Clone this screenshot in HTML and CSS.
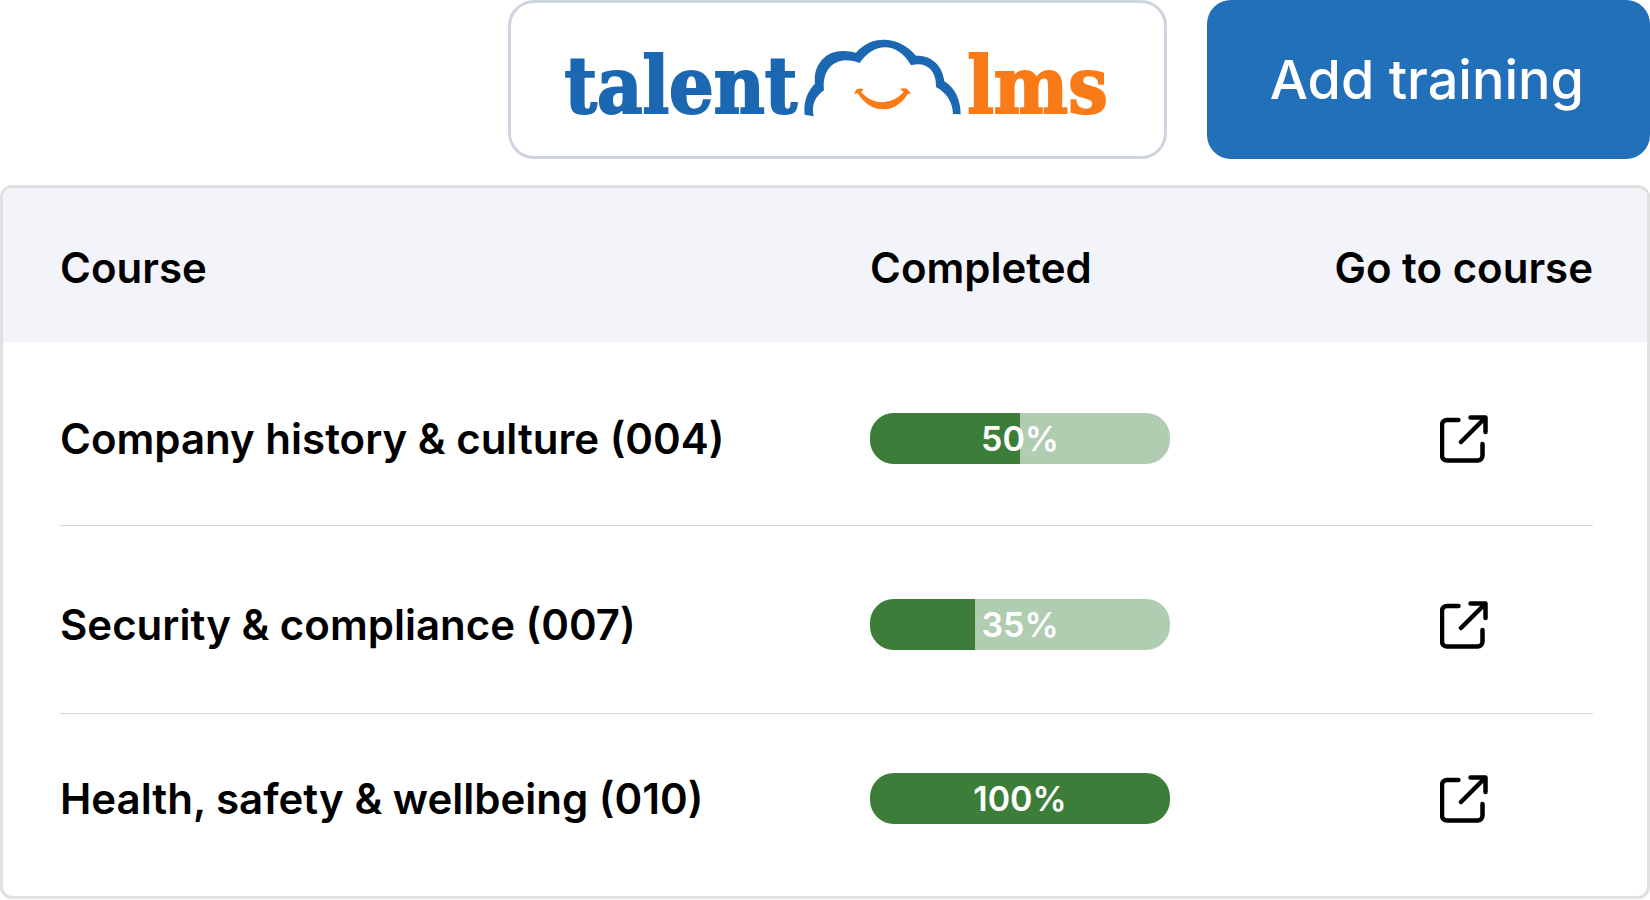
FILE: index.html
```html
<!DOCTYPE html>
<html lang="en">
<head>
<meta charset="utf-8">
<title>Courses</title>
<link rel="stylesheet" href="styles.css">
</head>
<body>
<svg class="sprite" aria-hidden="true">
  <symbol id="open" viewBox="0 0 48 48">
    <path d="M18.500 5H7a5 5 0 0 0-5 5V40.500a5 5 0 0 0 5 5H37.500a5 5 0 0 0 5-5V29M21 27 45 3M30.500 2.500H45.500V17" fill="none" stroke="currentColor" stroke-width="4.500" stroke-linecap="round" stroke-linejoin="round"/>
  </symbol>
</svg>
<main class="page">
  <header class="toolbar">
    <div class="brand">
      <span class="brand-talent">talent</span>
      <svg class="cloud" viewBox="70 110 480 240" aria-hidden="true">
        <path fill="#1b67b2" d="M78 343C74 304 86 273 109 250C102 187 150 144 205 153Q220 154 232 157C276 104 360 103 412 166C457 164 492 195 497 243C530 263 546 300 546 342L523 341C522 305 503 277 472 260C474 208 440 182 397 195C357 124 286 124 243 188C180 162 128 198 136 270C108 290 98 315 105 348Z"/>
        <path fill="#f97b17" d="M226 281L234 267Q245 262 254 267L248 276Q275 306 312 306Q350 304 375 275L364 267Q375 262 385 265L398 281L388 280Q358 327 312 327Q268 327 237 279Z"/>
      </svg>
      <span class="brand-lms">lms</span>
    </div>
    <button class="add" type="button">Add training</button>
  </header>
  <section class="card">
    <table class="courses">
      <thead>
        <tr><th class="name" scope="col">Course</th><th class="done" scope="col">Completed</th><th class="go" scope="col">Go to course</th></tr>
      </thead>
      <tbody>
        <tr>
          <td class="name">Company history &amp; culture (004)</td>
          <td class="done"><div class="bar" role="progressbar" aria-label="Company history &amp; culture" aria-valuenow="50"><div class="fill" style="width:50%"></div><span class="value">50%</span></div></td>
          <td class="go"><a class="link" href="#course-004" aria-label="Open course 004"><svg class="icon"><use href="#open"/></svg></a></td>
        </tr>
        <tr>
          <td class="name">Security &amp; compliance (007)</td>
          <td class="done"><div class="bar" role="progressbar" aria-label="Security &amp; compliance" aria-valuenow="35"><div class="fill" style="width:35%"></div><span class="value">35%</span></div></td>
          <td class="go"><a class="link" href="#course-007" aria-label="Open course 007"><svg class="icon"><use href="#open"/></svg></a></td>
        </tr>
        <tr>
          <td class="name">Health, safety &amp; wellbeing (010)</td>
          <td class="done"><div class="bar" role="progressbar" aria-label="Health, safety &amp; wellbeing" aria-valuenow="100"><div class="fill" style="width:100%"></div><span class="value">100%</span></div></td>
          <td class="go"><a class="link" href="#course-010" aria-label="Open course 010"><svg class="icon"><use href="#open"/></svg></a></td>
        </tr>
      </tbody>
    </table>
  </section>
</main>
</body>
</html>
```
FILE: styles.css
```css
* { box-sizing: border-box; }
body { margin: 0; background: #fff; color: #000; font-family: Inter, "Liberation Sans", sans-serif; }
.sprite { position: absolute; width: 0; height: 0; }
.page { display: flex; flex-direction: column; gap: 26px; }
.toolbar { display: flex; justify-content: flex-end; gap: 40px; }
.brand { display: flex; align-items: flex-start; gap: 5px; padding: 34px 56px 20px 54px; border: 3px solid #ced5de; border-radius: 26px; font: bold 78px/97px "DejaVu Serif Condensed", "DejaVu Serif", serif; -webkit-text-stroke: 2px currentColor; }
.brand-talent { color: #1b67b2; }
.brand-lms { color: #f97b17; }
.cloud { width: 160px; height: 80px; }
.add { padding: 48px 66px 48px 63px; border: 0; border-radius: 24px; background: #226fba; color: #fff; font: 500 54px/63px Inter, "Liberation Sans", sans-serif; }
.card { border: 3px solid #e0e0e0; border-radius: 12px; overflow: hidden; }
.courses { width: 100%; border-collapse: collapse; font-size: 42px; line-height: 52px; font-weight: 600; }
.courses th, .courses td { padding: 0; text-align: left; font-weight: 600; white-space: nowrap; vertical-align: top; }
.courses th { padding-top: 54px; padding-bottom: 48px; background: #f3f4f9; }
.courses td { padding-top: 71px; padding-bottom: 61px; }
.courses tbody tr:nth-child(2) td { padding-top: 73px; padding-bottom: 63px; }
.courses tbody tr:nth-child(3) td { padding-top: 59px; padding-bottom: 71px; }
.courses tbody tr { position: relative; }
.courses tbody tr:not(:last-child)::after { content: ""; position: absolute; left: 57px; right: 54px; bottom: 0; height: 1px; background: #d4d6d8; }
.courses .name { padding-left: 57px; }
.courses .done { width: 464px; }
.courses .go { width: 313px; padding-right: 54px; text-align: center; }
.courses th.go { text-align: right; }
.bar { display: grid; width: 300px; height: 51px; border-radius: 24px; overflow: hidden; background: #b0cdb2; }
.fill, .value { grid-area: 1 / 1; }
.fill { background: #3c7e39; }
.value { place-self: start center; color: #fff; font-size: 34px; line-height: 51px; }
.link { display: inline-flex; padding-top: 2px; color: #000; vertical-align: top; }
.icon { width: 48px; height: 48px; }
```
